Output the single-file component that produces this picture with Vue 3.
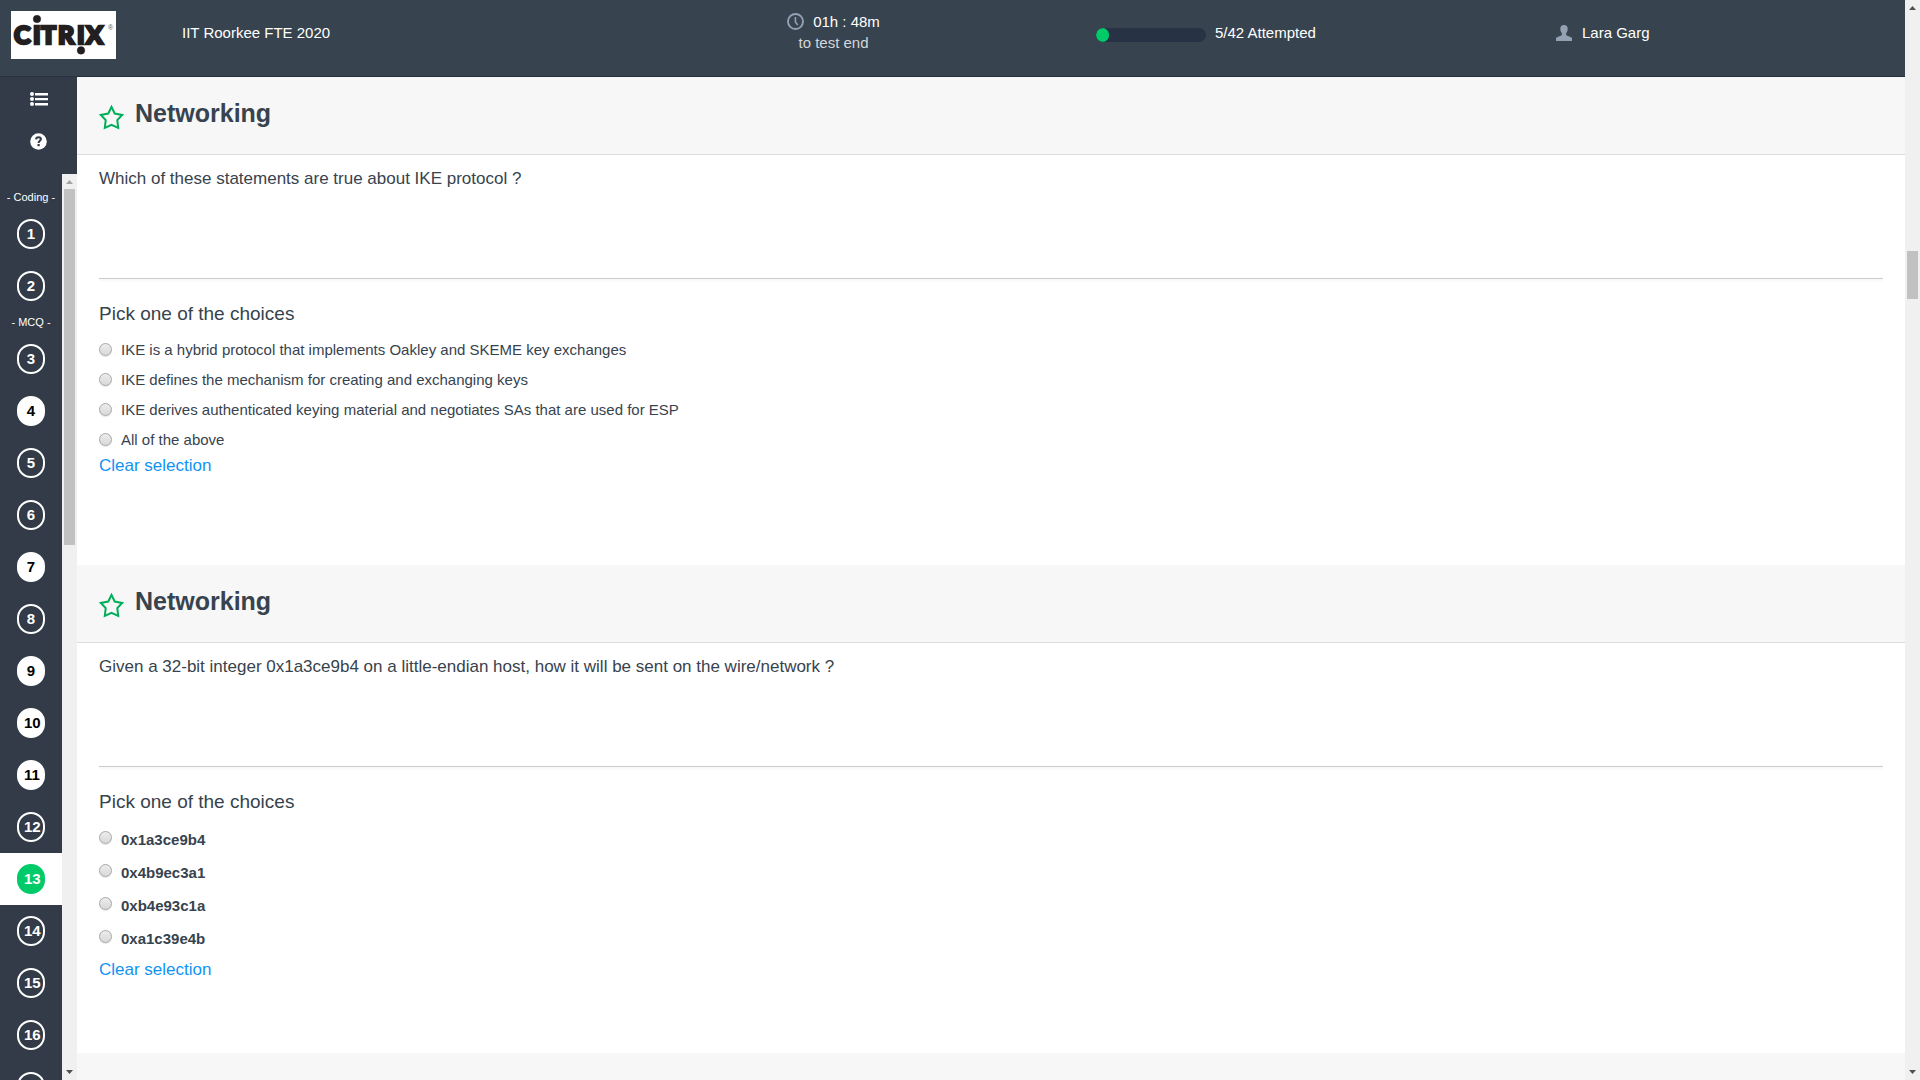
<script setup>
import { ref } from 'vue'

const attempted = [4, 7, 9, 10, 11]
const current = 13
const total = 42

const groups = [
  { label: '- Coding -', items: [1, 2] },
  { label: '- MCQ -', items: Array.from({ length: 15 }, (_, i) => i + 3) }
]

const questions = [
  {
    id: 'q12',
    title: 'Networking',
    text: 'Which of these statements are true about IKE protocol ?',
    code: false,
    options: [
      'IKE is a hybrid protocol that implements Oakley and SKEME key exchanges',
      'IKE defines the mechanism for creating and exchanging keys',
      'IKE derives authenticated keying material and negotiates SAs that are used for ESP',
      'All of the above'
    ]
  },
  {
    id: 'q13',
    title: 'Networking',
    text: 'Given a 32-bit integer 0x1a3ce9b4 on a little-endian host, how it will be sent on the wire/network ?',
    code: true,
    options: ['0x1a3ce9b4', '0x4b9ec3a1', '0xb4e93c1a', '0xa1c39e4b']
  }
]

const answers = ref({ q12: null, q13: null })
const progress = (attempted.length / total) * 100
</script>

<template>
  <div class="page">
    <div class="app">
      <header class="topbar">
        <div class="brand">
          <svg class="logo" viewBox="0 0 105 48" role="img" aria-label="Citrix">
            <rect width="105" height="48" fill="#fff" />
            <g fill="#231f20" stroke="#231f20">
              <text class="logo-word" y="33" x="3 22 30 47 66 75" stroke-width="2.6">CITRIX</text>
              <circle cx="26" cy="8" r="3.8" stroke-width="0.4" />
              <circle cx="70" cy="39.4" r="3.8" stroke-width="0.4" />
            </g>
            <text class="logo-mark" x="97" y="19" fill="#555">®</text>
          </svg>
        </div>
        <div class="test-name">IIT Roorkee FTE 2020</div>
        <div class="timer">
          <div class="time">
            <svg class="clock" viewBox="0 0 17 17" fill="none" stroke="#93a1b3">
              <circle cx="8.5" cy="8.5" r="7.5" stroke-width="1.9" />
              <path d="M8.4 4v5l2.4 3" stroke-width="1.6" />
            </svg>
            <span>01h : 48m</span>
          </div>
          <div class="time-note">to test end</div>
        </div>
        <div class="attempts">
          <div class="bar"><div class="fill" :style="{ width: progress + '%' }"></div></div>
          <span>5/42 Attempted</span>
        </div>
        <div class="user">
          <svg class="person" viewBox="0 0 16 16" fill="#93a1b3">
            <path d="M8 0C10.3 0 11.8 1.5 11.7 4C11.6 6 11 7 10.2 8V10.2L15 12.3C15.8 12.7 16 13.3 16 14V16H0V14C0 13.3 .2 12.7 1 12.3L5.8 10.2V8C5 7 4.4 6 4.3 4C4.2 1.5 5.7 0 8 0Z" />
          </svg>
          <span>Lara Garg</span>
        </div>
      </header>

      <div class="content">
        <aside class="sidebar">
          <div class="tools">
            <button type="button" aria-label="Question list">
              <svg width="18" height="14" viewBox="0 0 18 14" fill="#fff">
                <circle cx="2" cy="2" r="2" /><circle cx="2" cy="7" r="2" /><circle cx="2" cy="12" r="2" />
                <path d="M5 1H18V3.500H5ZM5 6H18V8.300H5ZM5 11H18V13.400H5Z" />
              </svg>
            </button>
            <button type="button" aria-label="Help">
              <svg width="17" height="17" viewBox="0 0 17 17">
                <circle cx="8.5" cy="8.5" r="8.3" fill="#fff" />
                <path d="M6.1 6.4C6.2 4.8 7.1 4.2 8.5 4.2C9.8 4.2 10.9 5 10.9 6.1C10.9 7.8 8.6 7.7 8.6 9.9" fill="none" stroke="#323b47" stroke-width="2.1" />
                <rect x="7.5" y="11" width="2.2" height="2.2" fill="#323b47" />
              </svg>
            </button>
          </div>
          <div class="nav-area">
            <nav class="numbers" aria-label="Questions">
              <template v-for="g in groups" :key="g.label">
                <div class="group-label">{{ g.label }}</div>
                <ul>
                  <li v-for="n in g.items" :key="n" :class="{ current: n === current }">
                    <a :href="'#q' + n" :class="{ done: attempted.includes(n) }">{{ n }}</a>
                  </li>
                </ul>
              </template>
            </nav>
            <div class="scrollbar nav-scroll">
              <svg class="arrow" viewBox="0 0 15 15"><path d="M4 10L7.5 6L11 10Z" fill="#a3a3a3" /></svg>
              <div class="track"><div class="thumb"></div></div>
              <svg class="arrow" viewBox="0 0 15 15"><path d="M4 5L7.5 9L11 5Z" fill="#505050" /></svg>
            </div>
          </div>
        </aside>

        <main>
          <section v-for="q in questions" :id="q.id" :key="q.id" class="question">
            <div class="q-head">
              <svg class="star" viewBox="0 0 25 25" fill="none" stroke="#00ae5a" stroke-width="2">
                <path d="M12.5 1.9L15.7 8.5L23.2 9.9L18.3 15.1L19.2 22.9L12.5 19.8L5.8 22.9L6.7 15.1L1.8 9.9L9.3 8.5Z" />
              </svg>
              <h2>{{ q.title }}</h2>
            </div>
            <div class="q-body">
              <p>{{ q.text }}</p>
              <hr />
              <fieldset>
                <legend>Pick one of the choices</legend>
                <div class="options" :class="{ code: q.code }">
                  <label v-for="(o, i) in q.options" :key="o">
                    <input v-model="answers[q.id]" type="radio" :name="q.id" :value="i" />
                    <span>{{ o }}</span>
                  </label>
                </div>
              </fieldset>
              <a class="clear" :href="'#' + q.id" @click.prevent="answers[q.id] = null">Clear selection</a>
            </div>
          </section>
          <section class="question"><div class="q-head"></div></section>
        </main>
      </div>
    </div>

    <div class="scrollbar page-scroll">
      <svg class="arrow" viewBox="0 0 15 15"><path d="M4 10L7.5 6L11 10Z" fill="#505050" /></svg>
      <div class="track"><div class="thumb"></div></div>
      <svg class="arrow" viewBox="0 0 15 15"><path d="M4 5L7.5 9L11 5Z" fill="#505050" /></svg>
    </div>
  </div>
</template>

<style>
body {
  margin: 0;
  overflow: hidden;
}
</style>

<style scoped>
.page {
  display: flex;
  height: 100vh;
  overflow: hidden;
  background: #fff;
  color: #37434e;
  font-family: "Liberation Sans", Arial, sans-serif;
  font-size: 15px;
}
.page * {
  box-sizing: border-box;
}
.app {
  flex: 1;
  min-width: 0;
  display: flex;
  flex-direction: column;
}

.topbar {
  flex: none;
  display: grid;
  grid-template-columns: 182px 387fr 527fr 460fr 349fr;
  height: 77px;
  background: #37434e;
  border-bottom: 1px solid #27303c;
  color: #fff;
  line-height: 20px;
}
.brand {
  padding: 11px;
}
.logo {
  display: block;
  width: 105px;
  height: 48px;
}
.logo-word {
  font: 900 25px Lato, "Open Sans", sans-serif;
}
.logo-mark {
  font: 7px "Liberation Sans", sans-serif;
}
.test-name {
  padding-top: 23px;
}
.timer {
  padding: 11px 0 0 2px;
  line-height: 21px;
  text-align: center;
}
.time {
  display: flex;
  align-items: center;
  justify-content: center;
  gap: 9px;
}
.clock {
  width: 17px;
  height: 17px;
}
.time-note {
  color: #d3d6d9;
}
.attempts {
  display: flex;
  align-items: flex-start;
  gap: 9px;
  padding-top: 23px;
}
.bar {
  width: 110px;
  height: 14px;
  margin-top: 5px;
  border-radius: 7px;
  background: #273344;
  overflow: hidden;
}
.fill {
  height: 100%;
  border-radius: 7px;
  background: #00cb68;
}
.user {
  display: flex;
  align-items: flex-start;
  gap: 10px;
  padding-top: 23px;
}
.person {
  width: 16px;
  height: 16px;
  margin-top: 2px;
}

.content {
  flex: 1;
  display: flex;
  min-height: 0;
}
.sidebar {
  flex: none;
  display: flex;
  flex-direction: column;
  width: 77px;
  background: #323b47;
}
.tools {
  flex: none;
  height: 97px;
}
.tools button {
  display: flex;
  align-items: center;
  width: 100%;
  height: 43px;
  padding: 0 0 0 30px;
  border: 0;
  background: none;
}
.nav-area {
  flex: 1;
  display: flex;
  min-height: 0;
}
.numbers {
  flex: 1;
  padding-top: 13px;
  overflow: hidden;
}
.group-label {
  color: #fff;
  font-size: 11px;
  line-height: 21px;
  text-align: center;
}
ul {
  margin: 0;
  padding: 0;
  list-style: none;
}
li {
  display: flex;
  align-items: center;
  justify-content: center;
  height: 52px;
}
li a {
  width: 28px;
  height: 30px;
  padding: 0 5px;
  border: 2px solid #fff;
  border-radius: 14px;
  color: #fff;
  font-weight: bold;
  line-height: 26px;
  text-align: center;
  text-decoration: none;
}
li a.done {
  background: #fff;
  color: #000;
}
li.current {
  background: #fff;
}
li.current a {
  border-color: #00cb68;
  background: #00cb68;
}

.scrollbar {
  flex: none;
  display: flex;
  flex-direction: column;
  width: 15px;
  background: #f0f0f0;
}
.arrow {
  flex: none;
  width: 15px;
  height: 15px;
}
.track {
  flex: 1;
  padding: 0 2px;
}
.thumb {
  width: 11px;
  background: #c1c1c1;
}
.nav-scroll .thumb {
  height: 356px;
}
.page-scroll .track {
  padding-top: 236px;
}
.page-scroll .thumb {
  height: 48px;
}

main {
  flex: 1;
  min-width: 0;
  overflow: hidden;
}
.question {
  min-height: 488px;
}
.q-head {
  display: flex;
  align-items: flex-start;
  gap: 11px;
  height: 78px;
  padding: 21px 22px 0;
  background: #f7f7f7;
  border-bottom: 1px solid #ddd;
}
.star {
  width: 25px;
  height: 25px;
  margin-top: 7px;
}
h2 {
  margin: 0;
  font-size: 25px;
  line-height: 30px;
}
.q-body {
  padding: 12px 22px 0;
}
p {
  min-height: 111px;
  margin: 0;
  font-size: 17px;
  line-height: 24px;
}
hr {
  height: 1px;
  margin: 0;
  border: 0;
  background: #ccc;
  box-shadow: 0 1px 3px #e8e8e8;
}
fieldset {
  margin: 23px 0 0;
  padding: 0;
  border: 0;
}
legend {
  padding: 0;
  font-size: 19px;
  line-height: 24px;
}
.options {
  padding: 8px 0 2px;
}
.options label {
  display: flex;
  align-items: center;
  gap: 9px;
  height: 30px;
}
.options.code {
  padding: 9px 0 5px;
  font-weight: bold;
}
.options.code label {
  height: 33px;
}
.options.code input {
  margin-bottom: 4px;
}
input {
  appearance: none;
  width: 13px;
  height: 13px;
  margin: 0;
  border: 1px solid #a8a8a8;
  border-radius: 50%;
  background: linear-gradient(#ececec, #d9d9d9);
  box-shadow: 0 1px 1px #e4e4e4;
}
input:checked {
  background: radial-gradient(#444 0 3px, #e2e2e2 4px);
}
.clear {
  display: inline-block;
  color: #1094f4;
  font-size: 17px;
  line-height: 20px;
  text-decoration: none;
}
</style>
